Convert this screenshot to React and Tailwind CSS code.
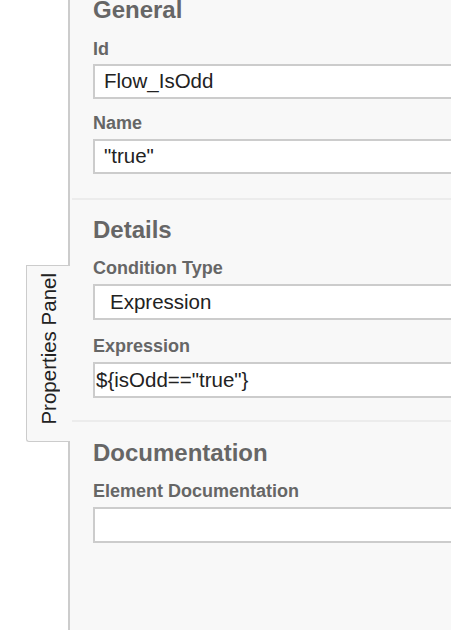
const font = "font-['Liberation_Sans',Arial,sans-serif]";

function Label({ children, className = "" }) {
  return (
    <div className={`h-[20px] leading-[20px] text-[18px] font-bold text-[#666] whitespace-nowrap ${className}`}>
      {children}
    </div>
  );
}

function Field({ value, className = "", pad = "pl-[9px]" }) {
  return (
    <div
      className={`w-[420px] box-border border-2 border-[#cccccc] bg-white flex items-center text-[20.5px] text-[#222] whitespace-nowrap ${pad} ${className}`}
    >
      {value}
    </div>
  );
}

function Heading({ children, className = "" }) {
  return (
    <h2 className={`h-[28px] leading-[28px] text-[24px] font-bold text-[#666] ${className}`}>
      {children}
    </h2>
  );
}

export default function App() {
  return (
    <div className={`w-[451px] h-[630px] overflow-hidden bg-white flex ${font}`}>
      <div className="w-[68px] shrink-0">
        <div className="relative z-10 mt-[265px] ml-[26px] w-[44px] h-[177px] bg-[#f8f8f8] border border-r-0 border-[#cccccc] rounded-bl-[3px] flex items-center justify-center pb-[10px]">
          <span className="[writing-mode:vertical-rl] rotate-180 text-[20.5px] leading-[24px] text-[#222] whitespace-nowrap">
            Properties Panel
          </span>
        </div>
      </div>

      <div className="w-[460px] shrink-0 h-full bg-[#f8f8f8] border-l-2 border-[#cccccc]">
        <section className="ml-[2px] pl-[21px] -mt-[4px] pb-[24px] border-b-2 border-[#ececec]">
          <Heading>General</Heading>
          <Label className="mt-[15px]">Id</Label>
          <Field value="Flow_IsOdd" className="mt-[5px] h-[35px]" />
          <Label className="mt-[14px]">Name</Label>
          <Field value={'"true"'} className="mt-[6px] h-[35px]" />
        </section>

        <section className="ml-[2px] pl-[21px] pt-[16px] pb-[22px] border-b-2 border-[#ececec]">
          <Heading>Details</Heading>
          <Label className="mt-[14px]">Condition Type</Label>
          <Field value="Expression" pad="pl-[15px]" className="mt-[6px] h-[36px]" />
          <Label className="mt-[16px]">Expression</Label>
          <Field value={'${isOdd=="true"}'} pad="pl-[1px]" className="mt-[6px] h-[36px]" />
        </section>

        <section className="ml-[2px] pl-[21px] pt-[17px]">
          <Heading>Documentation</Heading>
          <Label className="mt-[14px]">Element Documentation</Label>
          <Field value="" className="mt-[6px] h-[36px]" />
        </section>
      </div>
    </div>
  );
}
